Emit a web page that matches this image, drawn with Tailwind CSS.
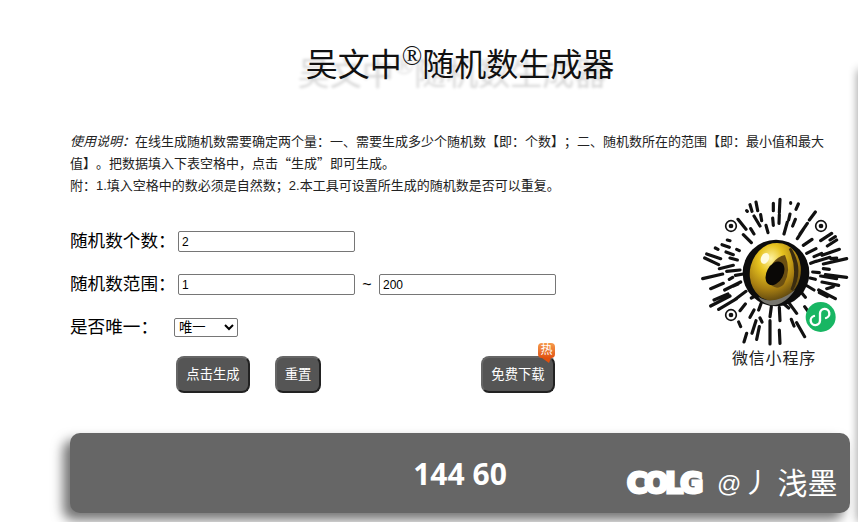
<!DOCTYPE html>
<html lang="zh-CN">
<head>
    <meta charset="UTF-8">
    <title>吴文中随机数生成器</title>
    <script src="https://cdn.jsdelivr.net/npm/@tailwindcss/browser@4"></script>
</head>
<body class="bg-white text-black h-[522px] overflow-hidden relative font-['Liberation_Sans','Noto_Sans_CJK_SC',sans-serif]">
    <!-- page shadow along the right edge -->
    <div class="absolute left-[858px] top-[70px] w-2 h-[452px] shadow-[0_0_10px_rgba(0,0,0,0.45)]"></div>

    <div class="ml-[70px] w-[780px]">
        <h1 class="pt-[43px] h-[131px] text-center text-[32px] leading-[44px] font-normal text-[#111] [text-shadow:-8px_9px_3px_rgba(0,0,0,0.16)]">吴文中<sup class="text-[27px] top-[-0.42em] font-['Liberation_Serif',serif]">®</sup>随机数生成器</h1>

        <p class="w-[760px] text-[13px] leading-[22px] text-[#222] [text-spacing-trim:space-all]"><i>使用说明：</i>在线生成随机数需要确定两个量：一、需要生成多少个随机数【即：个数】；二、随机数所在的范围【即：最小值和最大值】。把数据填入下表空格中，点击<span class="leading-[0] font-['Noto_Sans_CJK_SC',sans-serif]">“生成”</span>即可生成。<br>附：1.填入空格中的数必须是自然数；2.本工具可设置所生成的随机数是否可以重复。</p>

        <div class="flex">
            <form class="w-[620px] shrink-0 pt-[34px]">
                <div class="flex items-center h-[21px]">
                    <label class="w-[108px] text-[17.6px] leading-[21px] [text-spacing-trim:space-all]">随机数个数：</label>
                    <input value="2" class="w-[177px] h-[21px] pl-[3px] text-xs border border-[#767676] rounded-[2px] bg-white">
                </div>
                <div class="flex items-center h-[21px] mt-[22px]">
                    <label class="w-[108px] text-[17.6px] leading-[21px] [text-spacing-trim:space-all]">随机数范围：</label>
                    <input value="1" class="w-[177px] h-[21px] pl-[3px] text-xs border border-[#767676] rounded-[2px] bg-white">
                    <span class="w-6 text-center text-base">~</span>
                    <input value="200" class="w-[177px] h-[21px] pl-[3px] text-xs border border-[#767676] rounded-[2px] bg-white">
                </div>
                <div class="flex items-center h-[19px] mt-[23px]">
                    <label class="w-[104px] text-[17.6px] leading-[19px] [text-spacing-trim:space-all]">是否唯一：</label>
                    <select class="w-16 h-[19px] text-[13.33px] border border-[#767676] rounded-[2px] bg-white">
                        <option>唯一</option>
                    </select>
                </div>
                <div class="flex mt-[19px] pl-[106px]">
                    <button type="button" class="w-[74px] h-[37px] text-[13.33px] text-white bg-[#555] rounded-lg border-2 border-t-[#666] border-l-[#666] border-r-[#222] border-b-[#222]">点击生成</button>
                    <button type="button" class="w-[46px] h-[37px] ml-[25px] text-[13.33px] text-white bg-[#555] rounded-lg border-2 border-t-[#666] border-l-[#666] border-r-[#222] border-b-[#222]">重置</button>
                    <div class="relative ml-[160px]">
                        <button type="button" class="w-[74px] h-[37px] text-[13.33px] text-white bg-[#555] rounded-lg border-2 border-t-[#666] border-l-[#666] border-r-[#222] border-b-[#222]">免费下载</button>
                        <span class="absolute left-[57px] top-[-13px] w-[17px] h-[15px] rounded-[4px] bg-gradient-to-b from-[#f59a4a] to-[#e0500f] text-white text-xs leading-[15px] text-center">热</span>
                        <span class="absolute left-[61px] top-[2px] w-0 h-0 border-l-[7px] border-r-[2px] border-t-[5px] border-l-transparent border-r-transparent border-t-[#e0500f]"></span>
                    </div>
                </div>
            </form>

            <aside class="w-[168px] shrink-0">
                <!-- mini program code, coordinates are 3x -->
                <svg viewBox="0 21 504 450" width="168" height="150" fill="none">
                    <defs>
                        <radialGradient id="gold" cx="35%" cy="30%" r="80%">
                            <stop offset="0" stop-color="#fff3a0"/>
                            <stop offset="0.3" stop-color="#e6c21e"/>
                            <stop offset="0.65" stop-color="#a87f12"/>
                            <stop offset="1" stop-color="#4a3810"/>
                        </radialGradient>
                    </defs>
                    <path stroke="#111" stroke-width="9.5" stroke-linecap="round" d="
                        M198 36L203 62 M180 44L186 64 M170 62L172 64 M250 40L250 62 M270 28L268 68 M268 74L267 100 M325 42L318 58
                        M376 66L358 90 M300 72L296 90 M292 96L282 132 M316 88L308 108 M248 84L250 106 M212 74L215 92 M228 106L234 128
                        M144 88L168 118 M192 78L210 108 M182 116L192 132 M160 134L184 158 M352 100L330 132 M340 118L322 146 M366 148L340 166
                        M425 130L392 152 M440 150L412 168 M378 176L350 190 M395 190L372 200 M448 178L396 196 M470 206L400 222 M378 214L362 220
                        M470 262L406 254 M388 248L368 246 M446 286L396 276 M376 268L360 264 M436 326L386 300 M372 300L352 288 M412 320L388 308
                        M346 322L328 300 M320 370L298 340 M296 354L282 342 M268 352L270 392 M244 350L240 380 M214 338L206 360 M192 360L180 382
                        M166 342L150 362 M344 440L320 398 M312 408L304 388 M268 420L270 460 M240 392L240 462 M198 392L186 430 M170 430L162 456 M208 410L200 448
                        M130 332L168 304 M72 330L114 312 M62 348L120 318 M86 358L140 326 M104 300L152 276 M62 296L100 280 M38 266L98 252 M110 244L150 240
                        M44 204L86 224 M50 192L92 206 M120 204L142 210 M88 236L130 226 M112 150L120 152 M96 164L118 172 M76 174L84 178 M108 186L130 194
                        M140 178L148 182 M136 256L160 252 M118 268L128 262 M130 288L144 282 M410 296L430 290 M392 258L440 266 M400 236L418 238 M422 206L440 204
                        M344 350L360 372 M200 316L184 324 M146 396L152 410 M210 384L216 396 M302 38L302 40 M380 214L420 202 M420 150L436 140"/>
                    <circle cx="123" cy="108" r="16" stroke="#111" stroke-width="5"/>
                    <circle cx="123" cy="108" r="7" fill="#111"/>
                    <circle cx="393" cy="108" r="16" stroke="#111" stroke-width="5"/>
                    <circle cx="393" cy="108" r="7" fill="#111"/>
                    <circle cx="123" cy="375" r="16" stroke="#111" stroke-width="5"/>
                    <circle cx="123" cy="375" r="7" fill="#111"/>
                    <circle cx="258" cy="249" r="100" fill="#0c0c0c"/>
                    <ellipse cx="256" cy="246" rx="76" ry="88" transform="rotate(14 256 246)" fill="url(#gold)"/>
                    <path d="M205 320Q250 350 315 300Q280 350 240 345Q215 340 205 320Z" fill="#77766f"/>
                    <path d="M300 175Q340 240 305 300Q330 240 300 175Z" fill="#3a2c10" stroke="#3a2c10" stroke-width="8"/>
                    <path d="M232 268Q240 205 285 195Q305 240 282 282Q255 310 232 268Z" fill="#6b4f12"/>
                    <ellipse cx="255" cy="250" rx="25" ry="38" transform="rotate(28 255 250)" fill="#0a0806"/>
                    <ellipse cx="225" cy="205" rx="12" ry="17" transform="rotate(25 225 205)" fill="#fffbe0"/>
                    <circle cx="392" cy="381" r="45" fill="#18b663"/>
                    <path d="M372 378A14 14 0 1 0 390 392V370A14 14 0 1 1 408 384" stroke="#fff" stroke-width="7" stroke-linecap="round"/>
                </svg>
                <p class="w-[168px] text-center text-[16px] leading-6 tracking-[0.8px] text-[#222]">微信小程序</p>
            </aside>
        </div>

        <div class="relative flex items-center justify-center h-20 mt-10 bg-[#666] rounded-[10px] shadow-[-7px_7px_12px_rgba(0,0,0,0.55)]">
            <span class="text-[30px] font-bold text-white font-['Open_Sans',sans-serif]">144 60</span>
            <!-- site watermark -->
            <div class="absolute left-[557px] top-[31px] flex items-center whitespace-nowrap text-white h-10">
                <span class="w-[78px] text-[28px] font-black font-['DejaVu_Sans',sans-serif] tracking-[-3px] [-webkit-text-stroke:3px_white]">COLG</span>
                <span class="ml-3 text-2xl leading-none">@</span>
                <span class="ml-[1px] text-[28px] font-normal leading-none">丿</span>
                <span class="ml-[7px] text-[30px] font-normal leading-none">浅墨</span>
            </div>
        </div>
    </div>
</body>
</html>
